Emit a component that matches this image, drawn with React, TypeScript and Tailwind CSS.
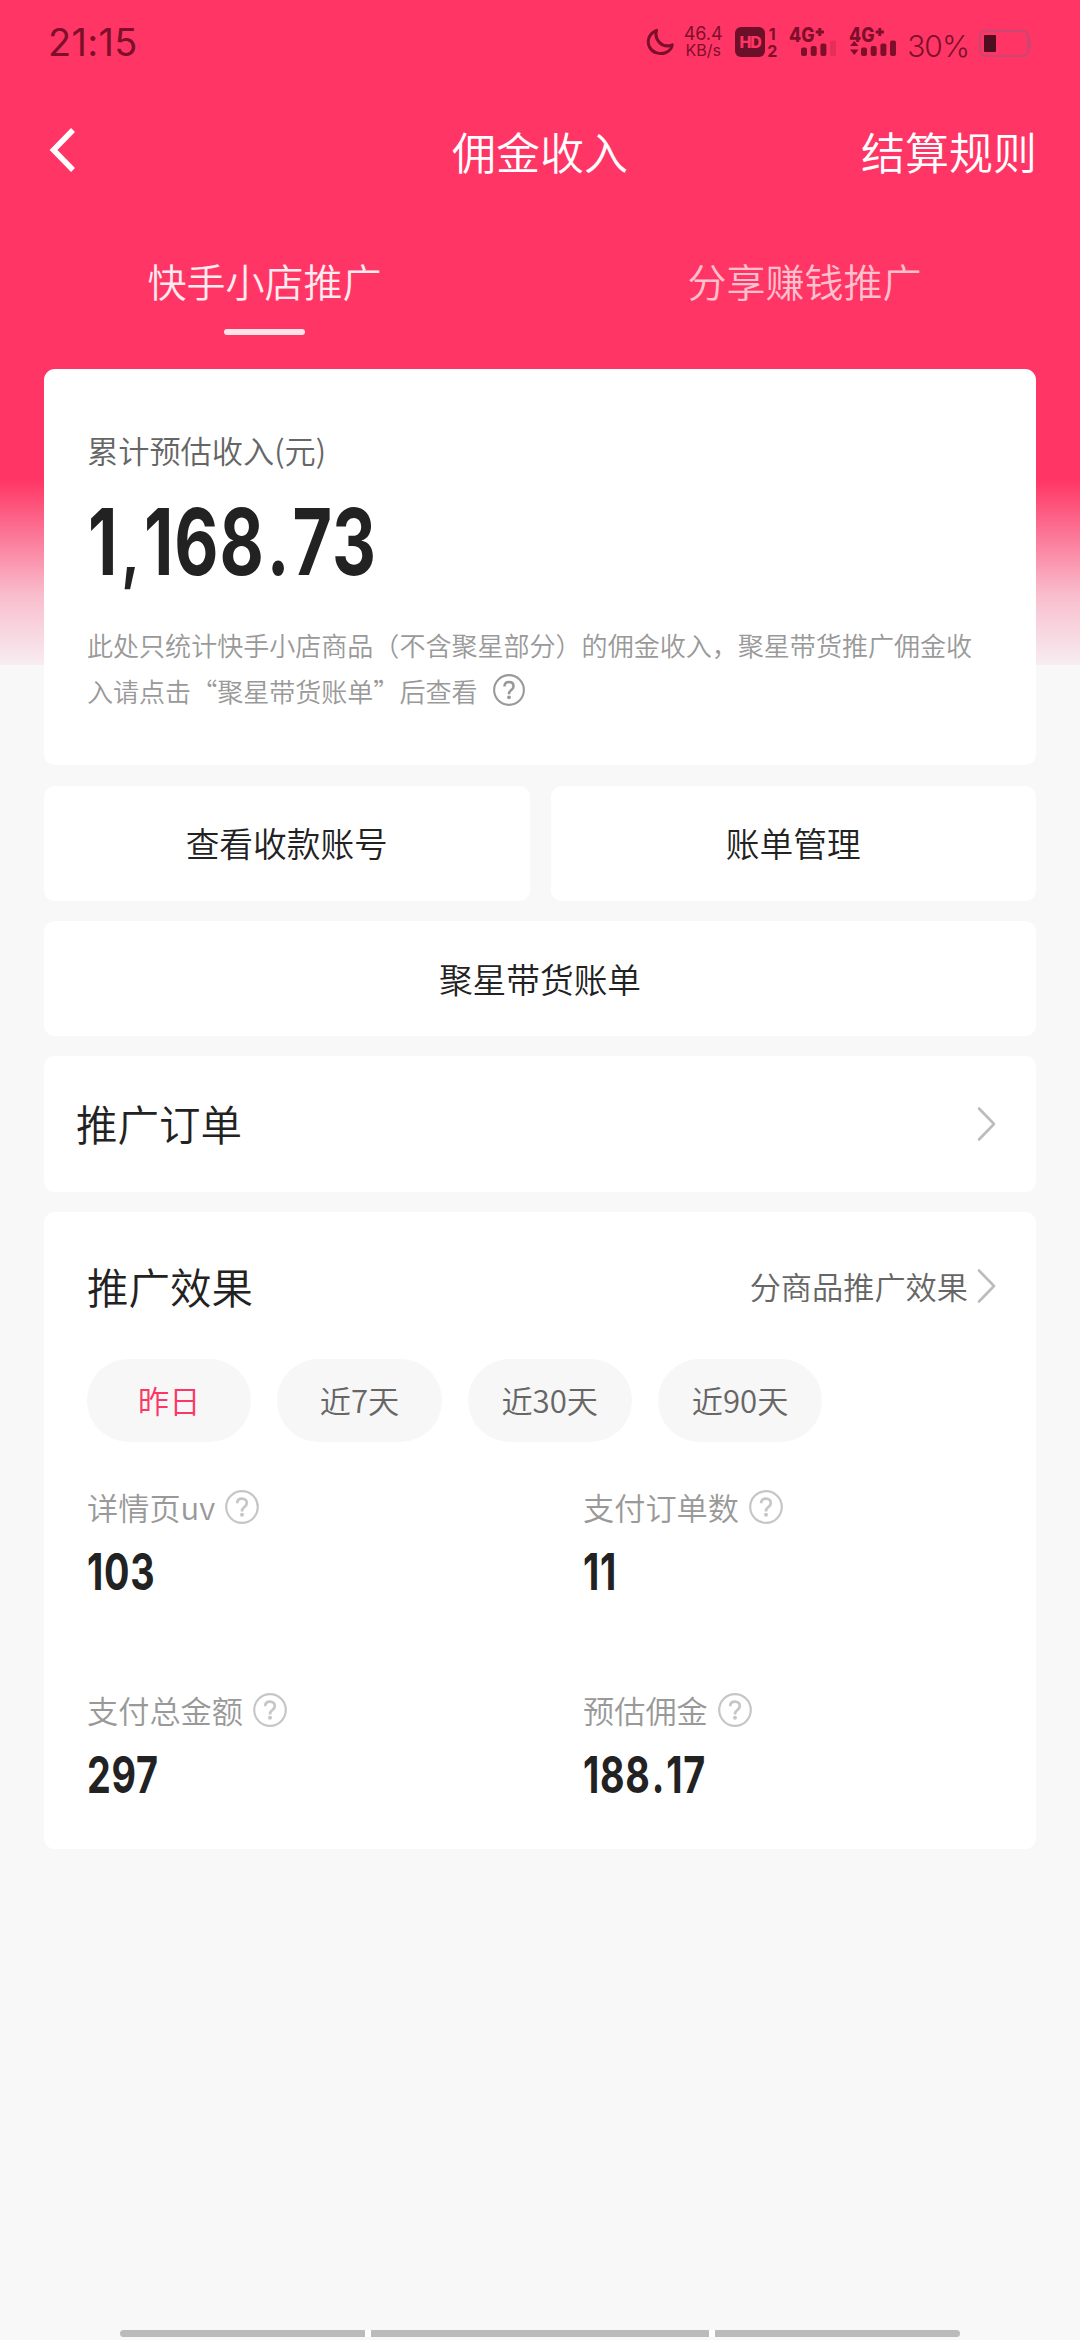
import { useState } from 'react';
import type { ReactNode } from 'react';

const ranges = ['昨日', '近7天', '近30天', '近90天'];

const stats = [
    { label: '详情页uv', value: '103' },
    { label: '支付订单数', value: '11' },
    { label: '支付总金额', value: '297' },
    { label: '预估佣金', value: '188.17' },
];

function HelpIcon({ className }: { className: string }) {
    return (
        <svg viewBox="0 0 34 34" fill="none" stroke="currentColor" strokeWidth="2.200" className={className}>
            <circle cx="17" cy="17" r="15.8" />
            <path d="M12.200 13.2c0-3 2-4.600 4.800-4.600s4.800 1.700 4.800 4.300c0 2.300-1.200 3.200-2.700 4.400-1.400 1.100-2.100 2-2.100 3.900v.4" strokeWidth="2.700" />
            <circle cx="17" cy="24.800" r="2" fill="currentColor" stroke="none" />
        </svg>
    );
}

function ChevronIcon() {
    return (
        <svg viewBox="0 0 20 36" fill="none" stroke="#bcbcbc" strokeWidth="2.600" className="w-5 h-9">
            <path d="M2 2.500l15 15.500L2 33.500" strokeLinecap="round" strokeLinejoin="round" />
        </svg>
    );
}

function SignalBars({ weak, arrows }: { weak?: boolean; arrows?: boolean }) {
    return (
        <svg viewBox="0 -8 50 40" fill="currentColor" className="w-[50px] h-10 -mt-2">
            <text x="0" y="15.500" fontSize="19.500" fontWeight="800" textLength="25.500" lengthAdjust="spacingAndGlyphs" fontFamily="Inter, sans-serif">4G</text>
            <path d="M26.700 6h8.200M30.800 1.900v8.200" stroke="currentColor" strokeWidth="2.900" />
            {arrows && <path d="M1 20l4.300-5 4.300 5zM1 23.600l4.300 5.400 4.300-5.400z" />}
            <rect x="12" y="21.500" width="6" height="8.500" rx="2" />
            <rect x="21.700" y="20" width="6" height="10" rx="2" />
            <rect x="31.400" y="17.500" width="6" height="12.500" rx="2" />
            <rect x="41" y="14.500" width="6" height="15.500" rx="2" opacity={weak ? 0.2 : 1} />
        </svg>
    );
}

// Condensed bold figures, with a little air around the separators
function Amount({ value, className }: { value: string; className: string }) {
    return (
        <div className={`w-max origin-left scale-x-[0.74] font-[Inter,sans-serif] font-bold ${className}`}>
            {value.split(/([.,])/).map((part, i) => (
                <span key={i} className={part === ',' ? 'mx-[0.06em] text-[0.8em]' : part === '.' ? 'mx-[0.03em]' : ''}>{part}</span>
            ))}
        </div>
    );
}

function StatusBar() {
    return (
        <div className="flex items-start justify-between h-[86px] pl-12 pr-12 text-[#7d0f2b] font-[Inter,sans-serif]">
            <div className="mt-[18px] text-[38px] leading-[48px] tracking-[0.3px] font-normal">21:15</div>
            <div className="flex items-start mt-[26px]">
                <svg viewBox="0 0 28 30" fill="none" stroke="currentColor" strokeWidth="3" strokeLinejoin="round" className="w-7 h-[30px] mr-[9px]">
                    <path d="M10.500 4.300C3 7.500.500 15 3.500 21S14 29 20 26.500C23.500 25 25.800 22 26.300 18.800 22 20.500 17 20 13.600 16.600 10.300 13.300 9.300 8.500 10.500 4.300Z" />
                </svg>
                <div className="flex flex-col items-center w-10 mr-3 text-[18px] leading-[16px] font-normal">
                    <span>46.4</span>
                    <span className="text-[16px]">KB/s</span>
                </div>
                <div className="w-[30px] h-[30px] mt-px rounded-[6px] bg-[#6c1029] text-[#ff3665] text-[16px] leading-[30px] tracking-[-1px] text-center font-extrabold">HD</div>
                <div className="flex flex-col items-center w-3 ml-px mr-[11px] text-[16px] leading-[17px] font-bold">
                    <span>1</span>
                    <span>2</span>
                </div>
                <SignalBars weak />
                <div className="w-[10px]" />
                <SignalBars arrows />
                <div className="ml-2 mt-1 text-[30px] leading-[32px] tracking-[-1px] font-light">30%</div>
                <svg viewBox="0 0 54 30" fill="none" className="w-[54px] h-[30px] ml-[9px] mt-px">
                    <rect x="2" y="4" width="48" height="25" rx="5" stroke="#cf4470" strokeWidth="2.500" />
                    <path d="M52 12v9" stroke="#cf4470" strokeWidth="2" />
                    <rect x="6" y="8" width="12" height="17" rx="1" fill="#4f0d20" />
                </svg>
            </div>
        </div>
    );
}

function Card({ className = '', children }: { className?: string; children: ReactNode }) {
    return <div className={`bg-white rounded-[11px] ${className}`}>{children}</div>;
}

export default function App() {
    const [tab, setTab] = useState('shop');
    const [range, setRange] = useState('昨日');

    return (
        <div
            lang="zh-CN"
            className="flex flex-col w-[1080px] h-[2340px] overflow-hidden text-[#222] font-[350] font-['Noto_Sans_CJK_SC',sans-serif] bg-[#f8f8f8] bg-[linear-gradient(to_bottom,#ff3665_0px,#ff3665_480px,#fb7c9b_540px,#f9bdcd_595px,#f7edf1_665px,#f8f8f8_665px)]"
        >
            <StatusBar />

            <header className="grid grid-cols-3 items-center h-[130px] px-[43px] text-white text-[44px] leading-[64px]">
                <button className="justify-self-start ml-1">
                    <svg viewBox="0 0 30 48" fill="none" stroke="#fff" strokeWidth="5.500" className="w-[30px] h-12">
                        <path d="M26 3L6.500 23 26 43" />
                    </svg>
                </button>
                <h1 className="text-center">佣金收入</h1>
                <button className="justify-self-end">结算规则</button>
            </header>

            <nav className="grid grid-cols-2 h-[153px] pt-9 text-[39px] leading-[56px]">
                <button
                    onClick={() => setTab('shop')}
                    className={`flex flex-col items-center pr-[11px] ${tab === 'shop' ? 'text-white/90' : 'text-white/70'}`}
                >
                    快手小店推广
                    {tab === 'shop' && <span className="w-[81px] h-[6px] mt-[21px] rounded-full bg-white/85" />}
                </button>
                <button
                    onClick={() => setTab('share')}
                    className={`flex flex-col items-center pr-[11px] ${tab === 'share' ? 'text-white/90' : 'text-white/70'}`}
                >
                    分享赚钱推广
                    {tab === 'share' && <span className="w-[81px] h-[6px] mt-[21px] rounded-full bg-white/85" />}
                </button>
            </nav>

            <main className="flex flex-col gap-5 px-11">
                <Card className="h-[396px] pt-[59px] pl-[43px]">
                    <div className="text-[31.2px] leading-[44px] text-[#666]">累计预估收入(元)</div>
                    <Amount value="1,168.73" className="mt-[15px] ml-px h-[110px] text-[92px] leading-[110px] tracking-[0.014em]" />
                    <p className="mt-[25px] w-[906px] text-[26.04px] leading-[46px] text-[#999]">
                        此处只统计快手小店商品（不含聚星部分）的佣金收入，聚星带货推广佣金收入请点击“聚星带货账单”后查看
                        <HelpIcon className="inline w-8 h-8 ml-4 -mt-[9px]" />
                    </p>
                </Card>

                <div className="grid grid-cols-2 gap-[21px] mt-px text-[33.7px]">
                    <Card className="flex items-center justify-center h-[115px]">查看收款账号</Card>
                    <Card className="flex items-center justify-center h-[115px]">账单管理</Card>
                </div>

                <Card className="flex items-center justify-center h-[115px] pt-[2px] text-[33.7px]">聚星带货账单</Card>

                <Card className="flex items-center justify-between h-[136px] pl-8 pr-[39px] text-[41.5px]">
                    <span className="-mt-[2px]">推广订单</span>
                    <ChevronIcon />
                </Card>

                <Card className="h-[637px] pt-[44px]">
                    <div className="flex items-center justify-between h-[60px] pl-[43px] pr-[39px]">
                        <h2 className="text-[41.5px]">推广效果</h2>
                        <button className="flex items-center gap-[9px] text-[31.2px] text-[#666]">
                            分商品推广效果
                            <ChevronIcon />
                        </button>
                    </div>

                    <div className="flex gap-[26px] mt-[43px] pl-[43px]">
                        {ranges.map((item) => (
                            <button
                                key={item}
                                onClick={() => setRange(item)}
                                className={`w-[164.300px] h-[83px] rounded-full bg-[#f7f7f7] text-[31.2px] ${range === item ? 'text-[#fe3666]' : 'text-[#666]'}`}
                            >
                                {item}
                            </button>
                        ))}
                    </div>

                    <div className="grid grid-cols-2 mt-[43px]">
                        {stats.map((stat) => (
                            <div key={stat.label} className="h-[203px] pl-[43px]">
                                <div className="flex items-center gap-[10px] h-11 text-[31.2px] text-[#999]">
                                    {stat.label}
                                    <HelpIcon className="w-[34px] h-[34px] text-[#c6c6c6]" />
                                </div>
                                <Amount value={stat.value} className="mt-[13px] text-[51px] leading-[60px] tracking-[0.02em]" />
                            </div>
                        ))}
                    </div>
                </Card>
            </main>

            <div className="flex gap-[6px] w-[840px] mx-auto mt-auto mb-[3px] bg-white rounded-full overflow-hidden">
                <span className="w-[245px] h-[7px] bg-[#bbb]" />
                <span className="flex-1 h-[7px] bg-[#bbb]" />
                <span className="w-[245px] h-[7px] bg-[#bbb]" />
            </div>
        </div>
    );
}
